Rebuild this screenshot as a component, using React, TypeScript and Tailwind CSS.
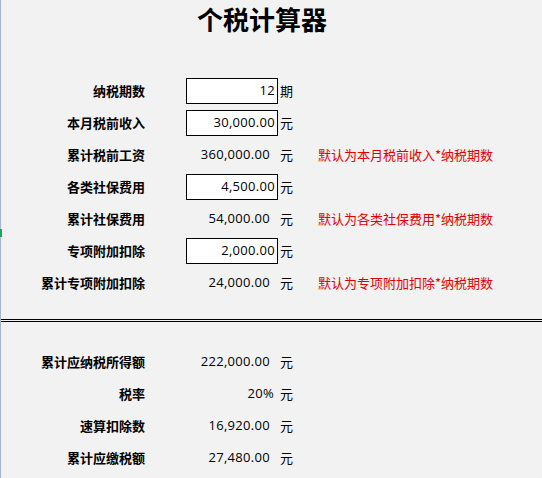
import React from "react";

type Row = {
  label: string;
  value: string;
  unit: string;
  input?: boolean;
  note?: string;
  pr?: string;
};

const INPUT_ROWS: Row[] = [
  { label: "纳税期数", value: "12", unit: "期", input: true },
  { label: "本月税前收入", value: "30,000.00", unit: "元", input: true },
  { label: "累计税前工资", value: "360,000.00", unit: "元", note: "默认为本月税前收入*纳税期数" },
  { label: "各类社保费用", value: "4,500.00", unit: "元", input: true },
  { label: "累计社保费用", value: "54,000.00", unit: "元", note: "默认为各类社保费用*纳税期数" },
  { label: "专项附加扣除", value: "2,000.00", unit: "元", input: true },
  { label: "累计专项附加扣除", value: "24,000.00", unit: "元", note: "默认为专项附加扣除*纳税期数" },
];

const RESULT_ROWS: Row[] = [
  { label: "累计应纳税所得额", value: "222,000.00", unit: "元" },
  { label: "税率", value: "20%", unit: "元", pr: "pr-[4px]" },
  { label: "速算扣除数", value: "16,920.00", unit: "元" },
  { label: "累计应缴税额", value: "27,480.00", unit: "元" },
];

const NUM_FONT = { fontFamily: '"Open Sans", "Noto Sans", sans-serif' };

function SheetRow({ row }: { row: Row }) {
  return (
    <div className="flex items-center h-[32px]">
      <div className="w-[144px] text-right font-bold">{row.label}</div>
      <div className="w-[41px]" />
      {row.input ? (
        <div
          className="w-[92px] h-[26px] border border-black bg-white flex items-center justify-end pr-[2px] tracking-[0.3px]"
          style={NUM_FONT}
        >
          {row.value}
        </div>
      ) : (
        <div className={`w-[92px] text-right tracking-[0.3px] ${row.pr ?? "pr-[8px]"}`} style={NUM_FONT}>
          {row.value}
        </div>
      )}
      <div className="w-[40px] pl-[2px]">{row.unit}</div>
      {row.note && <div className="text-[#e00000]">{row.note}</div>}
    </div>
  );
}

export default function App() {
  return (
    <div
      className="relative flex w-[542px] h-[478px] overflow-hidden bg-[#f2f2f2] text-[13px] text-black"
      style={{ fontFamily: '"Noto Sans CJK SC", "Noto Sans", sans-serif' }}
    >
      {/* sheet edge with the selected-row marker */}
      <div className="w-px shrink-0 bg-[#a9b4cc] relative">
        <div className="absolute left-0 top-[229px] w-[2px] h-[8px] bg-[#21a366]" />
      </div>

      <div className="flex-1 flex flex-col">
        <div className="h-[38px] pl-[196px] text-[26px] leading-[38px] font-bold">个税计算器</div>
        <div className="h-[37px]" />

        {INPUT_ROWS.map((r) => (
          <SheetRow key={r.label} row={r} />
        ))}

        <div className="mt-[20px] border-b-[3px] border-double border-black" />
        <div className="h-[24px]" />

        {RESULT_ROWS.map((r) => (
          <SheetRow key={r.label} row={r} />
        ))}
      </div>
    </div>
  );
}
